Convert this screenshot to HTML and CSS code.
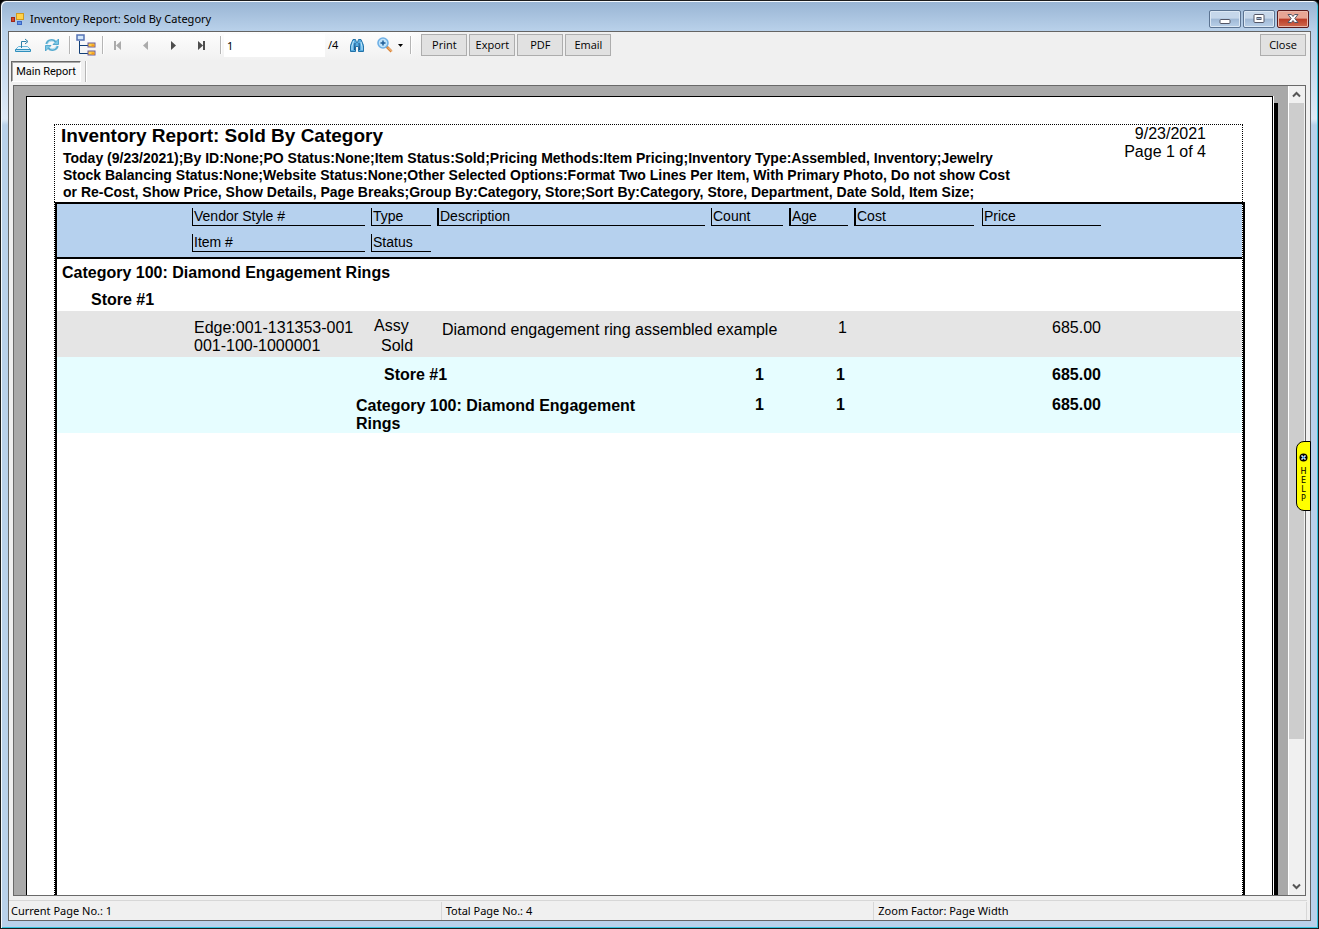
FILE: index.html
```html
<!DOCTYPE html>
<html lang="en">
<head>
<meta charset="utf-8">
<title>Inventory Report: Sold By Category</title>
<link rel="stylesheet" href="styles.css">
</head>
<body>
<div class="window">
  <header class="titlebar">
    <svg class="app-icon" width="14" height="14" viewBox="0 0 14 14" aria-hidden="true">
      <rect x="0.500" y="5.500" width="3" height="4" fill="#d4472c" stroke="#a02818"/>
      <rect x="5.500" y="1.500" width="7" height="6" fill="#ffd24a" stroke="#d09a20"/>
      <rect x="6.500" y="9.500" width="4" height="3" fill="#5f93e8" stroke="#3a66c4"/>
    </svg>
    <h1 class="title">Inventory Report: Sold By Category</h1>
    <div class="caption-buttons">
      <button class="caption" type="button" aria-label="Minimize">
        <svg width="12" height="12" viewBox="0 0 12 12"><rect x="1" y="6.500" width="10" height="4" rx="1" fill="#fff" stroke="#535666"/></svg>
      </button>
      <button class="caption" type="button" aria-label="Maximize">
        <svg width="12" height="12" viewBox="0 0 12 12"><rect x="1" y="1.500" width="10" height="8" rx="1" fill="#fff" stroke="#535666"/><rect x="4" y="4.500" width="4" height="2" fill="#9db8d6" stroke="#535666"/></svg>
      </button>
      <button class="caption caption-close" type="button" aria-label="Close window">
        <svg width="12" height="12" viewBox="0 0 12 12"><path d="M1 1.500h3.400L6 3.500l1.600-2H11L7.800 5.500 11 9.500H7.600L6 7.500l-1.600 2H1l3.200-4z" fill="#fff" stroke="#535666"/></svg>
      </button>
    </div>
  </header>

  <main class="client">
    <div class="toolbar">
      <button class="tool" type="button" aria-label="Export report">
        <svg width="18" height="16" viewBox="0 0 18 16" fill="none" stroke="#2b7fa8"><path d="M4.500 9.500h9l3 3h-15z" fill="#eaf5fb" stroke="#6db6d8"/><path d="M1.500 12.500h15v2h-15z" fill="#b9def0" stroke="#2f8fbd"/><path d="M7.500 11V4.500h5"/><path d="M11 2l3 2.500L11 7"/></svg>
      </button>
      <button class="tool" type="button" aria-label="Refresh">
        <svg width="14" height="14" viewBox="0 0 14 14" fill="none"><path d="M1.500 6C2.500 2 8 .8 10.500 4" stroke="#58acd0" stroke-width="2.400"/><path d="M13.500 1v5.500H8z" fill="#7cc8e6" stroke="#3f9cc6" stroke-width=".8"/><path d="M12.500 8c-1 4-6.500 5.200-9 2" stroke="#58acd0" stroke-width="2.400"/><path d="M.5 13V7.500H6z" fill="#7cc8e6" stroke="#3f9cc6" stroke-width=".8"/><path d="M2.500 5.500C4 2.800 7.500 2.200 9.500 4.500M11.500 8.500c-1.500 2.700-5 3.300-7 1" stroke="#c9ebf8"/></svg>
      </button>
      <span class="sep"></span>
      <button class="tool tool-tree" type="button" aria-label="Toggle group tree">
        <svg width="20" height="22" viewBox="0 0 20 22"><path d="M3.500 7v12.500H12M3.500 11.500H12" fill="none" stroke="#123f78"/><rect x="1" y="1" width="7" height="5" fill="#d3e8fb" stroke="#5573b5" stroke-width="1.500"/><rect x="12" y="9" width="7" height="4" fill="#ffcf45" stroke="#6b5a9a"/><rect x="12" y="17" width="7" height="4" fill="#ffcf45" stroke="#6b5a9a"/><path d="M15.500 10.500h3v2h-3zM15.500 18.500h3v2h-3z" fill="#f79a1c"/></svg>
      </button>
      <span class="sep"></span>
      <button class="tool tool-nav" type="button" aria-label="First page" disabled>
        <svg width="7" height="9" viewBox="0 0 7 9" fill="#ababab"><path d="M0 0h2v9H0zM7 0v9L2 4.500z"/></svg>
      </button>
      <button class="tool tool-nav" type="button" aria-label="Previous page" disabled>
        <svg width="5" height="9" viewBox="0 0 5 9" fill="#ababab"><path d="M5 0v9L0 4.500z"/></svg>
      </button>
      <button class="tool tool-nav" type="button" aria-label="Next page">
        <svg width="5" height="9" viewBox="0 0 5 9" fill="#4d4d4d"><path d="M0 0v9l5-4.500z"/></svg>
      </button>
      <button class="tool tool-nav" type="button" aria-label="Last page">
        <svg width="7" height="9" viewBox="0 0 7 9" fill="#4d4d4d"><path d="M5 0h2v9H5zM0 0v9l5-4.500z"/></svg>
      </button>
      <span class="sep"></span>
      <input class="page-input" type="text" value="1" aria-label="Page number">
      <span class="page-total">/4</span>
      <button class="tool" type="button" aria-label="Find text">
        <svg width="14" height="13" viewBox="0 0 14 13"><path d="M3 .5h2.500l1 3h1l1-3H11l2.500 6v6H8.500v-5h-3v5H.5v-6z" fill="#58ace0" stroke="#2272a8"/><path d="M3.500 2L2 7v4M11 3l1 5v3" fill="none" stroke="#c2e6fa"/><path d="M5 4l-.5 7M9 4l.5 7" fill="none" stroke="#184f85"/></svg>
      </button>
      <button class="tool tool-zoom" type="button" aria-label="Zoom">
        <svg width="16" height="16" viewBox="0 0 16 16"><path d="M9.500 9.500l5 5" stroke="#d98236" stroke-width="2.600"/><path d="M11 10.500l4 4" stroke="#f8cf9d"/><circle cx="6" cy="6" r="5" fill="#bfe3fa" stroke="#6fb0e6" stroke-width="1.600"/><path d="M6 3.500v5M3.500 6h5" stroke="#1d5c98" stroke-width="1.500"/></svg>
        <svg width="5" height="3" viewBox="0 0 5 3"><path d="M0 0h5L2.500 3z"/></svg>
      </button>
      <span class="sep"></span>
      <div class="actions">
        <button class="action" type="button">Print</button>
        <button class="action" type="button">Export</button>
        <button class="action" type="button">PDF</button>
        <button class="action" type="button">Email</button>
      </div>
      <button class="action action-close" type="button">Close</button>
    </div>

    <div class="tabs">
      <button class="tab" type="button">Main Report</button>
      <span class="sep"></span>
    </div>

    <section class="viewer">
      <div class="canvas">
        <article class="page">
          <div class="report-head">
            <div class="head-main">
              <h2 class="report-title">Inventory Report: Sold By Category</h2>
              <p class="params">Today (9/23/2021);By ID:None;PO Status:None;Item Status:Sold;Pricing Methods:Item Pricing;Inventory Type:Assembled, Inventory;Jewelry<br>Stock Balancing Status:None;Website Status:None;Other Selected Options:Format Two Lines Per Item, With Primary Photo, Do not show Cost<br>or Re-Cost, Show Price, Show Details, Page Breaks;Group By:Category, Store;Sort By:Category, Store, Department, Date Sold, Item Size;</p>
            </div>
            <p class="stamp">9/23/2021<br>Page 1 of 4</p>
          </div>
          <div class="report-body">
            <div class="frame">
              <div class="frame-inner">
                <table class="report">
                  <colgroup><col class="c-photo"><col class="c-item"><col class="c-type"><col class="c-desc"><col class="c-count"><col class="c-age"><col class="c-cost"><col class="c-price"><col></colgroup>
                  <thead>
                    <tr>
                      <td></td>
                      <th><span class="h">Vendor Style #</span></th>
                      <th><span class="h">Type</span></th>
                      <th><span class="h thick">Description</span></th>
                      <th><span class="h">Count</span></th>
                      <th><span class="h thick">Age</span></th>
                      <th><span class="h thick short">Cost</span></th>
                      <th><span class="h wide">Price</span></th>
                      <td></td>
                    </tr>
                    <tr>
                      <td></td>
                      <th><span class="h">Item #</span></th>
                      <th><span class="h">Status</span></th>
                      <td colspan="6"></td>
                    </tr>
                  </thead>
                  <tbody>
                    <tr class="group"><th colspan="9">Category 100: Diamond Engagement Rings</th></tr>
                    <tr class="group subgroup"><th colspan="9">Store #1</th></tr>
                    <tr class="detail">
                      <td></td>
                      <td>Edge:001-131353-001<br>001-100-1000001</td>
                      <td class="status">Assy<br><span class="indent">Sold</span></td>
                      <td colspan="2" class="desc">Diamond engagement ring assembled example</td>
                      <td class="num age">1</td>
                      <td></td>
                      <td class="num">685.00</td>
                      <td></td>
                    </tr>
                    <tr class="total store-total">
                      <td></td>
                      <th colspan="3">Store #1</th>
                      <td class="num count">1</td>
                      <td class="num age">1</td>
                      <td></td>
                      <td class="num">685.00</td>
                      <td></td>
                    </tr>
                    <tr class="total category-total">
                      <td></td>
                      <th colspan="3">Category 100: Diamond Engagement Rings</th>
                      <td class="num count">1</td>
                      <td class="num age">1</td>
                      <td></td>
                      <td class="num">685.00</td>
                      <td></td>
                    </tr>
                  </tbody>
                </table>
              </div>
            </div>
          </div>
        </article>
      </div>
      <div class="scrollbar">
        <button class="arrow" type="button" aria-label="Scroll up"><svg width="9" height="7" viewBox="0 0 9 7"><path d="M1 5.500L4.500 2 8 5.500" fill="none" stroke="#555" stroke-width="2"/></svg></button>
        <div class="track"><div class="thumb"></div></div>
        <button class="arrow" type="button" aria-label="Scroll down"><svg width="9" height="7" viewBox="0 0 9 7"><path d="M1 1.500L4.500 5 8 1.500" fill="none" stroke="#555" stroke-width="2"/></svg></button>
      </div>
    </section>

    <footer class="statusbar">
      <span class="pane">Current Page No.: 1</span>
      <span class="pane">Total Page No.: 4</span>
      <span class="pane">Zoom Factor: Page Width</span>
    </footer>

    <button class="help" type="button">
      <svg width="9" height="9" viewBox="0 0 9 9" aria-hidden="true"><circle cx="4.500" cy="4.500" r="4"/><path d="M2.500 2.500l4 4M6.500 2.500l-4 4" stroke="#fff" stroke-width="1.500"/><circle cx="4.500" cy="4.500" r="1.200" fill="#2f8fe0"/></svg>
      <span>H</span><span>E</span><span>L</span><span>P</span>
    </button>
  </main>
</div>
</body>
</html>
```
FILE: styles.css
```css
* { box-sizing: border-box; }

body {
  margin: 0;
  background: #000;
  color: #000;
  font: 11px/16px "Noto Sans", "Open Sans", sans-serif;
}

h1, h2, p { margin: 0; }

button, input { font: inherit; color: inherit; }

button {
  display: flex;
  align-items: center;
  justify-content: center;
  padding: 0;
  border: 0;
  background: none;
}

.window {
  display: flex;
  flex-direction: column;
  height: 100vh;
  padding: 0 7px 7px;
  border: 1px solid #1c1c1c;
  border-radius: 6px 6px 0 0;
  background: linear-gradient(#98b4d3, #b9d1ea 30px, #dfeaf6 118px, #b9d1ea 124px);
  box-shadow: inset 1px 1px #f4f9fd, inset -1px -1px #35c3dd;
}

.titlebar {
  display: flex;
  flex: none;
  align-items: center;
  height: 30px;
  padding: 6px 2px 0 3px;
}

.title {
  flex: 1;
  margin-left: 5px;
  font-size: 11px;
  font-weight: 400;
}

.caption-buttons { display: flex; gap: 2px; }

.caption {
  width: 32px;
  height: 18px;
  border: 1px solid #5b7391;
  border-radius: 2px;
  background: linear-gradient(#c6d7ea 45%, #9fb8d5 50%, #b9d0e8);
  box-shadow: inset 0 0 0 1px #dce8f4;
}

.caption-close {
  border-color: #5a1a1c;
  background: linear-gradient(#e8a594 45%, #bb3b25 50%, #cf6a50);
  box-shadow: inset 0 0 0 1px #eab9ac;
}

.client {
  position: relative;
  display: flex;
  flex: 1;
  flex-direction: column;
  min-height: 0;
  border: 1px solid #646464;
  background: #f0f0f0;
}

.toolbar {
  display: flex;
  flex: none;
  align-items: center;
  height: 28px;
  padding: 0 4px 2px 0;
  background: linear-gradient(90deg, transparent 400px, #f0f0f0 460px), linear-gradient(#fdfdfd, #f1f1f1);
}

.tool { width: 28px; height: 24px; margin-right: 1px; }

.tool-tree { width: 26px; }

.tool-nav { margin-right: 0; padding-right: 5px; }

.tool-zoom { gap: 5px; width: 35px; }

.sep {
  width: 2px;
  height: 18px;
  margin: 0 2px;
  border-left: 1px solid #b5b5b5;
  border-right: 1px solid #fff;
}

.page-input {
  width: 101px;
  height: 23px;
  padding: 0 3px;
  border: 0;
  background: #fff;
}

.page-total { margin: 0 5px 0 3px; }

.actions { display: flex; gap: 2px; margin-left: 7px; }

.action {
  width: 46px;
  height: 22px;
  border: 1px solid #adadad;
  background: #e1e1e1;
  font-family: "Open Sans", sans-serif;
}

.action-close { margin-left: auto; }

.tabs {
  display: flex;
  flex: none;
  align-items: center;
  height: 25px;
  padding: 0 2px 2px;
}

.tab {
  width: 70px;
  height: 21px;
  padding-top: 1px;
  border: 1px solid;
  border-color: #696969 #fff #fff #696969;
  background: #f8f8f8;
  box-shadow: inset 1px 1px #a9a9a9;
  font-family: Roboto, sans-serif;
}

.tabs .sep { height: 21px; margin-left: 4px; }

.viewer {
  display: flex;
  flex: 1;
  min-height: 0;
  margin: 0 4px;
  border: 1px solid #696969;
  background: #a9a9a9;
}

.canvas {
  display: flex;
  flex: 1;
  min-width: 0;
  overflow: hidden;
  padding: 10px 15px 0 12px;
}

.page {
  display: flex;
  flex: 1;
  flex-direction: column;
  min-width: 0;
  padding: 27px 27px 0;
  border: 1px solid #000;
  border-bottom: 0;
  background: #fff;
  box-shadow: 1px 0 #fff, 5px 7px #000;
  font-family: "Liberation Sans", Arial, sans-serif;
  font-size: 16px;
  line-height: 18px;
}

.report-head {
  display: flex;
  justify-content: space-between;
  height: 78px;
  margin-right: 2px;
  border: 1px dotted #000;
  border-bottom: 0;
}

.head-main { padding-left: 6px; }

.report-title { font-size: 19px; line-height: 22px; }

.params {
  margin-top: 3px;
  padding-left: 2px;
  font-size: 14px;
  font-weight: 700;
  line-height: 17px;
  white-space: nowrap;
}

.stamp { padding-right: 36px; text-align: right; white-space: nowrap; }

.report-body {
  display: flex;
  flex: 1;
  border-left: 1px dotted #000;
}

.frame {
  display: flex;
  flex: 1;
  border: 2px solid #000;
  border-bottom: 0;
}

.frame-inner { flex: 1; border-right: 1px dotted #000; }

.report {
  width: 100%;
  table-layout: fixed;
  border-collapse: collapse;
}

.c-photo { width: 135px; }
.c-item { width: 179px; }
.c-type { width: 66px; }
.c-desc { width: 274px; }
.c-count { width: 78px; }
.c-age { width: 65px; }
.c-cost { width: 128px; }
.c-price { width: 119px; }

.report th, .report td { padding: 0; text-align: left; vertical-align: top; }

.report thead { background: #b6d1ee; border-bottom: 2px solid #000; }

.report thead th { height: 26px; padding-top: 4px; font-size: 14px; font-weight: 400; }

.report thead tr + tr th { height: 28px; }

.h {
  display: block;
  height: 18px;
  margin-right: 6px;
  padding-left: 1px;
  border-bottom: 1px solid #000;
  border-left: 1px solid #000;
  line-height: 16px;
}

.thick { border-left-width: 2px; }

.short { margin-right: 8px; }

.wide { margin-right: 0; }

.report .group th { height: 26px; padding: 5px 5px 0; }

.report .subgroup th { height: 27px; padding: 7px 0 0 34px; }

.detail { background: #e5e5e5; }

.report .detail td { height: 46px; padding: 8px 0 2px 2px; }

.report .detail .status { padding: 5px 0 0 3px; line-height: 20px; }

.indent { padding-left: 7px; }

.report .detail .desc { padding: 10px 0 0 5px; }

.report td.num { text-align: right; }

.report .detail td.num { padding-right: 0; }

.report .detail td.age { padding-right: 7px; }

.total { background: #e6fdff; font-weight: 700; }

.report .total th, .report .total td { padding-top: 9px; }

.report .store-total th { height: 32px; padding-left: 192px; }

.report .category-total th { height: 44px; padding: 8px 60px 0 164px; }

.report .category-total td { padding-top: 7px; }

.report .total .count { padding-right: 25px; }

.report .total .age { padding-right: 9px; }

.scrollbar {
  display: flex;
  flex: none;
  flex-direction: column;
  width: 17px;
  border-left: 1px solid #fff;
  background: #f0f0f0;
}

.arrow { width: 15px; height: 17px; }

.track { flex: 1; }

.thumb { height: 82%; margin-right: 1px; background: #cdcdcd; }

.statusbar {
  display: grid;
  flex: none;
  grid-template-columns: repeat(3, 1fr);
  height: 20px;
  margin: 4px 3px 0 0;
  border-top: 1px solid #d7d7d7;
}

.pane {
  height: 18px;
  margin-top: 1px;
  padding-left: 2px;
  border-right: 1px solid #d7d7d7;
  line-height: 18px;
}

.pane + .pane { padding-left: 4px; }

.help {
  position: absolute;
  top: 409px;
  right: -1px;
  flex-direction: column;
  width: 15px;
  height: 70px;
  padding-top: 4px;
  border: 1px solid #000;
  border-radius: 8px 0 0 8px;
  background: #ff0;
  font: 8px/9px "DejaVu Sans", sans-serif;
}

.help svg { margin-bottom: 5px; }
```
